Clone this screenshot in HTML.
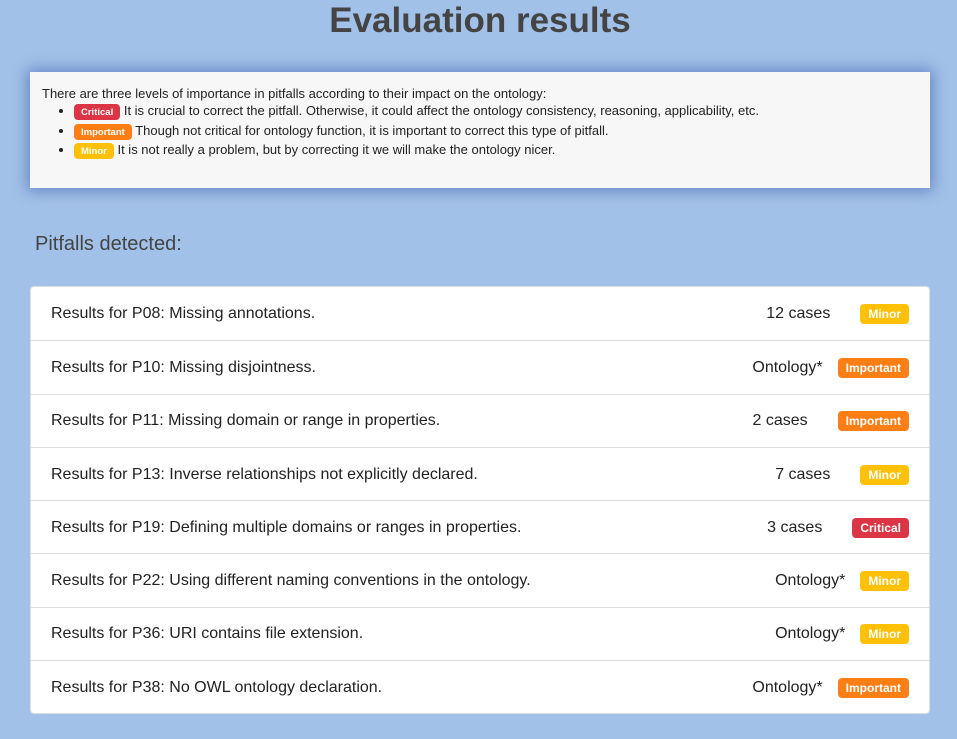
<!DOCTYPE html>
<html><head><meta charset="utf-8"><style>
body{margin:0;background:#a2c1e8;font-family:"Liberation Sans",sans-serif;color:#333;width:957px;height:739px;overflow:hidden;position:relative}
h1{margin:0;position:absolute;top:1px;left:0;width:960px;text-align:center;font-size:35px;line-height:40px;color:#444;font-weight:bold}
.box{position:absolute;left:30px;top:72px;width:900px;height:116px;background:#f7f7f7;box-shadow:0 0 14px 3px #6686c4;font-size:13px;color:#222;box-sizing:border-box;padding:14px 12px}
.box ul{margin:0;padding-left:32px}
.box li{line-height:19.5px}
.b{display:inline-block;color:#fff;font-weight:bold;border-radius:4px}
.box .b{font-size:9.5px;padding:3px 7px 2px;line-height:11px}
.c{background:#dc3545}.i{background:#fd7e14}.m{background:#ffc107}
h2{position:absolute;left:35px;top:233px;margin:0;font-weight:normal;font-size:20px;color:#444}
.list{position:absolute;left:30px;top:286px;width:898px;background:#fff;border:1px solid #ddd;border-radius:4px}
.row{height:51.3px;border-top:1px solid #ddd;display:flex;align-items:center;padding:1px 20px 0;font-size:16px;color:#222}
.row:first-child{border-top:none;height:52.3px}
.row .t{flex:1}
.row .b{font-size:12px;padding:3px 8px;line-height:14px}
.cs{margin-right:30px}.on{margin-right:15px}
</style></head><body>
<h1>Evaluation results</h1>
<div class="box">There are three levels of importance in pitfalls according to their impact on the ontology:
<ul>
<li><span class="b c">Critical</span> It is crucial to correct the pitfall. Otherwise, it could affect the ontology consistency, reasoning, applicability, etc.</li>
<li><span class="b i">Important</span> Though not critical for ontology function, it is important to correct this type of pitfall.</li>
<li><span class="b m">Minor</span> It is not really a problem, but by correcting it we will make the ontology nicer.</li>
</ul></div>
<h2>Pitfalls detected:</h2>
<div class="list">
<div class="row"><span class="t">Results for P08: Missing annotations.</span><span class="cs">12 cases</span><span class="b m">Minor</span></div>
<div class="row"><span class="t">Results for P10: Missing disjointness.</span><span class="on">Ontology*</span><span class="b i">Important</span></div>
<div class="row"><span class="t">Results for P11: Missing domain or range in properties.</span><span class="cs">2 cases</span><span class="b i">Important</span></div>
<div class="row"><span class="t">Results for P13: Inverse relationships not explicitly declared.</span><span class="cs">7 cases</span><span class="b m">Minor</span></div>
<div class="row"><span class="t">Results for P19: Defining multiple domains or ranges in properties.</span><span class="cs">3 cases</span><span class="b c">Critical</span></div>
<div class="row"><span class="t">Results for P22: Using different naming conventions in the ontology.</span><span class="on">Ontology*</span><span class="b m">Minor</span></div>
<div class="row"><span class="t">Results for P36: URI contains file extension.</span><span class="on">Ontology*</span><span class="b m">Minor</span></div>
<div class="row"><span class="t">Results for P38: No OWL ontology declaration.</span><span class="on">Ontology*</span><span class="b i">Important</span></div>
</div>
</body></html>
